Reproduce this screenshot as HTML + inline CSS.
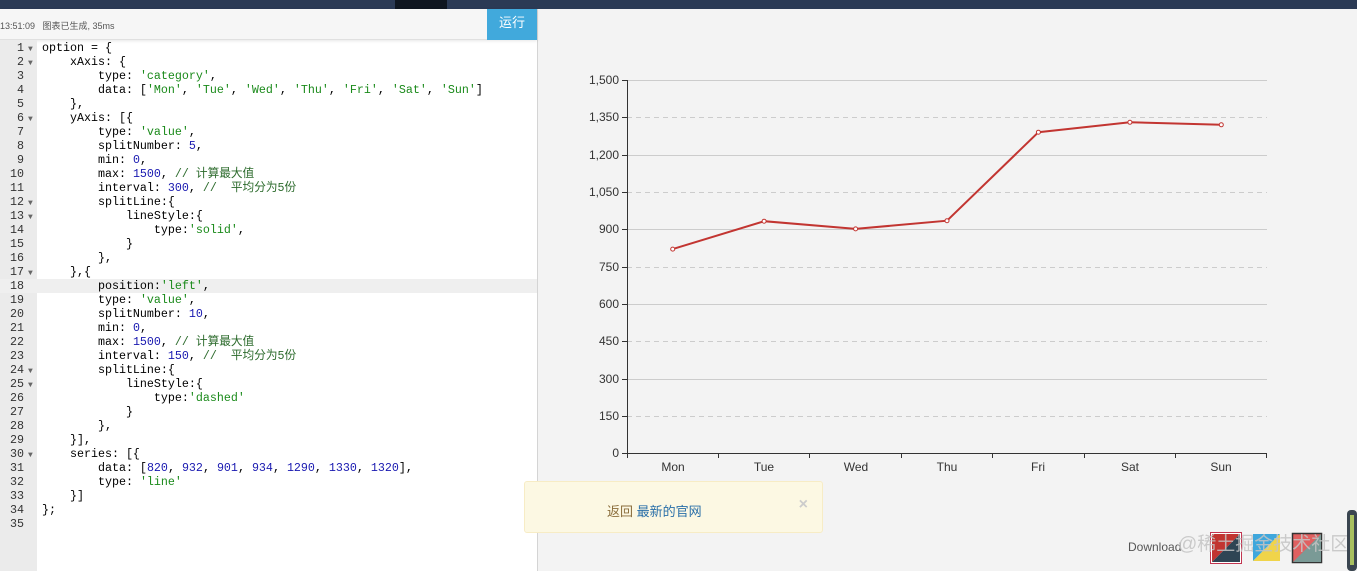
<!DOCTYPE html>
<html><head><meta charset="utf-8"><style>
*{margin:0;padding:0;box-sizing:border-box}
body{width:1357px;height:571px;overflow:hidden;background:#f3f3f3;font-family:"Liberation Sans","Noto Sans CJK SC",sans-serif;position:relative}
#top{position:absolute;left:0;top:0;width:1357px;height:9px;background:#2b3a55}
#top i{position:absolute;left:395px;top:0;width:52px;height:9px;background:#0f1620}
#left{position:absolute;left:0;top:9px;width:538px;height:562px;background:#fff;border-right:1px solid #d4d4d4}
#bar{position:absolute;left:0;top:0;width:537px;height:31px;background:#f6f6f6;border-bottom:1px solid #e0e0e0;box-shadow:0 1px 3px rgba(0,0,0,.1)}
#bar span{position:absolute;left:0;top:10px;font-size:9px;color:#555}
#run{position:absolute;left:487px;top:0;width:50px;height:31px;background:#41a9dc;color:#fff;font-size:13px;text-align:center;line-height:27px}
#gut{position:absolute;left:0;top:31px;width:37px;height:531px;background:#ebebeb}
#code{position:absolute;left:0;top:32px;width:537px;font-family:"Liberation Mono","Noto Sans CJK SC",monospace;font-size:11.67px;line-height:14px;color:#000}
.l{height:14px;white-space:pre;position:relative}
.n{display:inline-block;width:24px;text-align:right;color:#333}
.f{display:inline-block;width:18px;color:#666;font-size:8px;padding-left:4px}
.hl{background:#efefef}
.s{color:#1a8a1a}.d{color:#1818b0}.c{color:#2b6a2b}
#note{position:absolute;left:524px;top:481px;width:299px;height:52px;background:#fcf8e3;border:1px solid #f7ecc5;border-radius:3px;font-size:13px;color:#8a6d3b}
#note b{font-weight:normal;position:absolute;left:82px;top:19px}
#note a{color:#2a6fa8}
#note x{position:absolute;right:14px;top:14px;color:#ccc;font-size:16px;font-weight:bold}
</style></head><body>
<div id="top"><i></i></div>
<div id="left">
<div id="bar"><span>13:51:09 &nbsp;&nbsp;图表已生成, 35ms</span><div id="run">运行</div></div>
<div id="gut"></div>
<div id="code">
<div class="l"><span class="n">1</span><span class="f">▼</span>option = {</div>
<div class="l"><span class="n">2</span><span class="f">▼</span>    xAxis: {</div>
<div class="l"><span class="n">3</span><span class="f"></span>        type: <span class="s">'category'</span>,</div>
<div class="l"><span class="n">4</span><span class="f"></span>        data: [<span class="s">'Mon'</span>, <span class="s">'Tue'</span>, <span class="s">'Wed'</span>, <span class="s">'Thu'</span>, <span class="s">'Fri'</span>, <span class="s">'Sat'</span>, <span class="s">'Sun'</span>]</div>
<div class="l"><span class="n">5</span><span class="f"></span>    },</div>
<div class="l"><span class="n">6</span><span class="f">▼</span>    yAxis: [{</div>
<div class="l"><span class="n">7</span><span class="f"></span>        type: <span class="s">'value'</span>,</div>
<div class="l"><span class="n">8</span><span class="f"></span>        splitNumber: <span class="d">5</span>,</div>
<div class="l"><span class="n">9</span><span class="f"></span>        min: <span class="d">0</span>,</div>
<div class="l"><span class="n">10</span><span class="f"></span>        max: <span class="d">1500</span>, <span class="c">// 计算最大值</span></div>
<div class="l"><span class="n">11</span><span class="f"></span>        interval: <span class="d">300</span>, <span class="c">//  平均分为5份</span></div>
<div class="l"><span class="n">12</span><span class="f">▼</span>        splitLine:{</div>
<div class="l"><span class="n">13</span><span class="f">▼</span>            lineStyle:{</div>
<div class="l"><span class="n">14</span><span class="f"></span>                type:<span class="s">'solid'</span>,</div>
<div class="l"><span class="n">15</span><span class="f"></span>            }</div>
<div class="l"><span class="n">16</span><span class="f"></span>        },</div>
<div class="l"><span class="n">17</span><span class="f">▼</span>    },{</div>
<div class="l hl"><span class="n">18</span><span class="f"></span>        position:<span class="s">'left'</span>,</div>
<div class="l"><span class="n">19</span><span class="f"></span>        type: <span class="s">'value'</span>,</div>
<div class="l"><span class="n">20</span><span class="f"></span>        splitNumber: <span class="d">10</span>,</div>
<div class="l"><span class="n">21</span><span class="f"></span>        min: <span class="d">0</span>,</div>
<div class="l"><span class="n">22</span><span class="f"></span>        max: <span class="d">1500</span>, <span class="c">// 计算最大值</span></div>
<div class="l"><span class="n">23</span><span class="f"></span>        interval: <span class="d">150</span>, <span class="c">//  平均分为5份</span></div>
<div class="l"><span class="n">24</span><span class="f">▼</span>        splitLine:{</div>
<div class="l"><span class="n">25</span><span class="f">▼</span>            lineStyle:{</div>
<div class="l"><span class="n">26</span><span class="f"></span>                type:<span class="s">'dashed'</span></div>
<div class="l"><span class="n">27</span><span class="f"></span>            }</div>
<div class="l"><span class="n">28</span><span class="f"></span>        },</div>
<div class="l"><span class="n">29</span><span class="f"></span>    }],</div>
<div class="l"><span class="n">30</span><span class="f">▼</span>    series: [{</div>
<div class="l"><span class="n">31</span><span class="f"></span>        data: [<span class="d">820</span>, <span class="d">932</span>, <span class="d">901</span>, <span class="d">934</span>, <span class="d">1290</span>, <span class="d">1330</span>, <span class="d">1320</span>],</div>
<div class="l"><span class="n">32</span><span class="f"></span>        type: <span class="s">'line'</span></div>
<div class="l"><span class="n">33</span><span class="f"></span>    }]</div>
<div class="l"><span class="n">34</span><span class="f"></span>};</div>
<div class="l"><span class="n">35</span><span class="f"></span></div>
</div>
</div>
<svg style="position:absolute;left:0;top:0" width="1357" height="571" font-family="Liberation Sans,sans-serif" font-size="12" fill="#333">
<g stroke="#ccc" stroke-width="1">
<line x1="627" y1="80.5" x2="1267" y2="80.5"/><line x1="627" y1="155.5" x2="1267" y2="155.5"/><line x1="627" y1="229.5" x2="1267" y2="229.5"/><line x1="627" y1="304.5" x2="1267" y2="304.5"/><line x1="627" y1="379.5" x2="1267" y2="379.5"/>
</g>
<g stroke="#ccc" stroke-dasharray="5,4">
<line x1="627" y1="117.5" x2="1267" y2="117.5"/><line x1="627" y1="192.5" x2="1267" y2="192.5"/><line x1="627" y1="267.5" x2="1267" y2="267.5"/><line x1="627" y1="341.5" x2="1267" y2="341.5"/><line x1="627" y1="416.5" x2="1267" y2="416.5"/>
</g>
<g stroke="#333">
<line x1="627.5" y1="80" x2="627.5" y2="454"/><line x1="627" y1="453.5" x2="1267" y2="453.5"/>
<path d="M622 80.5h5M622 117.5h5M622 155.5h5M622 192.5h5M622 229.5h5M622 267.5h5M622 304.5h5M622 341.5h5M622 379.5h5M622 416.5h5M622 453.5h5"/>
<path d="M718.5 453v5M809.5 453v5M901.5 453v5M992.5 453v5M1084.5 453v5M1175.5 453v5M1266.5 453v5M627.5 453v5"/>
</g>
<g text-anchor="end">
<text x="619" y="84">1,500</text><text x="619" y="121">1,350</text><text x="619" y="159">1,200</text><text x="619" y="196">1,050</text><text x="619" y="233">900</text><text x="619" y="271">750</text><text x="619" y="308">600</text><text x="619" y="345">450</text><text x="619" y="383">300</text><text x="619" y="420">150</text><text x="619" y="457">0</text>
</g>
<g text-anchor="middle">
<text x="673" y="471">Mon</text><text x="764" y="471">Tue</text><text x="856" y="471">Wed</text><text x="947" y="471">Thu</text><text x="1038" y="471">Fri</text><text x="1130" y="471">Sat</text><text x="1221" y="471">Sun</text>
</g>
<polyline fill="none" stroke="#c23531" stroke-width="2" points="672.7,249.1 764.1,221.2 855.6,228.9 947,220.7 1038.4,132.2 1129.9,122.3 1221.3,124.8"/>
<g fill="#fff" stroke="#c23531" stroke-width="1">
<circle cx="672.7" cy="249.1" r="2"/><circle cx="764.1" cy="221.2" r="2"/><circle cx="855.6" cy="228.9" r="2"/><circle cx="947" cy="220.7" r="2"/><circle cx="1038.4" cy="132.2" r="2"/><circle cx="1129.9" cy="122.3" r="2"/><circle cx="1221.3" cy="124.8" r="2"/>
</g>
<text x="1128" y="551" fill="#555">Download</text>
<rect x="1210.5" y="532.5" width="31" height="31" fill="#fff" stroke="#c23550"/>
<polygon points="1212,534 1240,534 1212,562" fill="#c23531"/><polygon points="1240,534 1240,562 1212,562" fill="#2f4554"/>
<polygon points="1253,534 1280,534 1253,561" fill="#3fa7dc"/><polygon points="1280,534 1280,561 1253,561" fill="#f0d44a"/>
<rect x="1292.5" y="533.5" width="29" height="29" fill="#e06060" stroke="#333" stroke-width="1.5"/><polygon points="1321,534 1321,562 1293,562" fill="#7a9a96"/>
<text x="1178" y="550" font-family="Liberation Sans,Noto Sans CJK SC,sans-serif" font-size="19" fill="#c4c4c4" opacity=".85">@稀土掘金技术社区</text>
<rect x="1347" y="510" width="10" height="61" rx="4" fill="#3a4550"/>
<rect x="1350" y="515" width="4" height="50" fill="#a8c060"/>
</svg>
<div id="note"><b>返回 <a>最新的官网</a></b><x>×</x></div>
</body></html>
